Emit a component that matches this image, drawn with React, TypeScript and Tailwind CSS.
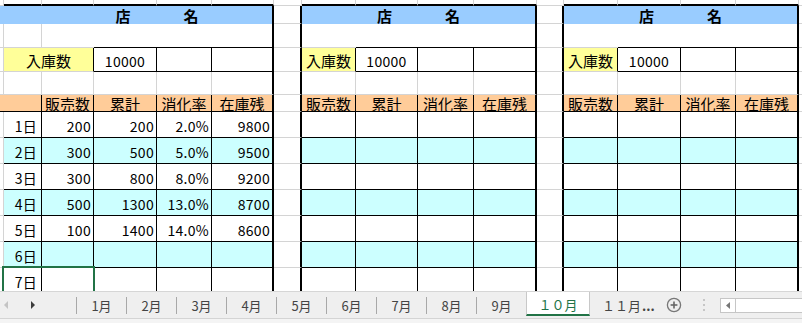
import React from 'react';

const RG = 'border-r border-r-[#d4d4d4]';
const RB = 'border-r border-r-black';
const RT = 'border-r-2 border-r-black';
const RN = '';
const BG = 'border-b border-b-[#d4d4d4]';
const BB = 'border-b border-b-black';
const BT = 'border-b-2 border-b-black';
const BN = '';

const BLUE = 'bg-[#99ccff]';
const YEL = 'bg-[#ffff99]';
const ORG = 'bg-[#ffcc99]';
const CYAN = 'bg-[#ccffff]';
const WH = 'bg-white';

type CellProps = {
  w: string;
  r?: string;
  b?: string;
  bg?: string;
  className?: string;
  children?: React.ReactNode;
};

function Cell({ w, r = RN, b = BN, bg = WH, className = '', children }: CellProps) {
  return (
    <div className={`${w} ${r} ${b} ${bg} shrink-0 h-full flex whitespace-nowrap ${className}`}>
      {children}
    </div>
  );
}

const T1 = ['w-[4px]', 'w-[38px]', 'w-[52px]', 'w-[63px]', 'w-[55px]', 'w-[62px]'];
const G1 = 'w-[28px]';
const T2 = ['w-[54px]', 'w-[62px]', 'w-[56px]', 'w-[63px]'];
const G2 = 'w-[27px]';
const T3 = ['w-[54px]', 'w-[63px]', 'w-[55px]', 'w-[63px]'];
const TAIL = 'flex-1 min-w-0';

const Gap1 = ({ r = RT, b = BG }: { r?: string; b?: string }) => <Cell w={G1} r={r} b={b} />;
const Gap2 = ({ r = RT, b = BG }: { r?: string; b?: string }) => <Cell w={G2} r={r} b={b} />;
const Tail = ({ b = BG }: { b?: string }) => <div className={`${TAIL} ${b} h-full bg-white`} />;

const jp = 'text-[15px] leading-none';
const num = 'text-[14px] leading-none tracking-[0.3px]';

function ShopName() {
  return (
    <div className="flex-1 flex items-center justify-center gap-[53px] font-bold text-[15px] leading-none pt-[1px]">
      <span>店</span>
      <span>名</span>
    </div>
  );
}

function Label({ t }: { t: string }) {
  return <div className={`flex-1 flex items-center justify-center ${jp} pt-[1px]`}>{t}</div>;
}

function Num({ t, center }: { t: string; center?: boolean }) {
  return (
    <div
      className={`flex-1 flex items-center ${center ? 'justify-center' : 'justify-end pr-[2px]'} ${num} pt-[2px]`}
    >
      {t}
    </div>
  );
}

const days: string[][] = [
  ['1日', '200', '200', '2.0%', '9800'],
  ['2日', '300', '500', '5.0%', '9500'],
  ['3日', '300', '800', '8.0%', '9200'],
  ['4日', '500', '1300', '13.0%', '8700'],
  ['5日', '100', '1400', '14.0%', '8600'],
  ['6日', '', '', '', ''],
  ['7日', '', '', '', ''],
];

const heads = ['販売数', '累計', '消化率', '在庫残'];

function SmallTable({ cols, kind, bg }: { cols: string[]; kind: string; bg?: string }) {
  if (kind === 'top') {
    return (
      <>
        {cols.map((w, i) => (
          <Cell key={i} w={w} r={RG} b={BT} />
        ))}
      </>
    );
  }
  if (kind === 'blue') {
    return (
      <Cell w="w-[235px]" r={RT} bg={BLUE}>
        <ShopName />
      </Cell>
    );
  }
  if (kind === 'row2') {
    return (
      <>
        <Cell w={cols[0]} b={BG} />
        <Cell w={cols[1]} b={BB} />
        <Cell w={cols[2]} b={BB} />
        <Cell w={cols[3]} r={RT} b={BB} />
      </>
    );
  }
  if (kind === 'stock') {
    return (
      <>
        <Cell w={cols[0]} r={RB} b={BG} bg={YEL}>
          <Label t="入庫数" />
        </Cell>
        <Cell w={cols[1]} r={RB} b={BB}>
          <Num t="10000" center />
        </Cell>
        <Cell w={cols[2]} r={RB} b={BB} />
        <Cell w={cols[3]} r={RT} b={BB} />
      </>
    );
  }
  if (kind === 'row4') {
    return (
      <>
        <Cell w={cols[0]} r={RG} b={BG} />
        <Cell w={cols[1]} r={RG} b={BG} />
        <Cell w={cols[2]} r={RG} b={BG} />
        <Cell w={cols[3]} r={RT} b={BG} />
      </>
    );
  }
  if (kind === 'head') {
    return (
      <>
        {cols.map((w, i) => (
          <Cell key={i} w={w} r={i === 3 ? RT : RB} b={BB} bg={ORG}>
            <Label t={heads[i]} />
          </Cell>
        ))}
      </>
    );
  }
  return (
    <>
      {cols.map((w, i) => (
        <Cell key={i} w={w} r={i === 3 ? RT : RB} b={BB} bg={bg} />
      ))}
    </>
  );
}

function Sheet() {
  return (
    <div className="relative h-[291px] overflow-hidden bg-white">
      <div className="flex h-[6px]">
        {T1.map((w, i) => (
          <Cell key={i} w={w} r={RG} b={i === 0 ? BG : BT} />
        ))}
        <Gap1 r={RG} />
        <SmallTable cols={T2} kind="top" />
        <Gap2 r={RG} />
        <SmallTable cols={T3} kind="top" />
        <Tail />
      </div>
      <div className="flex h-[18px]">
        <Cell w="w-[42px]" bg={BLUE} />
        <Cell w="w-[232px]" r={RT} bg={BLUE}>
          <ShopName />
        </Cell>
        <Gap1 />
        <SmallTable cols={T2} kind="blue" />
        <Gap2 />
        <SmallTable cols={T3} kind="blue" />
        <Tail />
      </div>
      <div className="flex h-[24px]">
        <Cell w={T1[0]} r={RG} b={BG} />
        <Cell w={T1[1]} r={RG} b={BG} />
        <Cell w={T1[2]} b={BG} />
        <Cell w={T1[3]} b={BB} />
        <Cell w={T1[4]} b={BB} />
        <Cell w={T1[5]} r={RT} b={BB} />
        <Gap1 />
        <SmallTable cols={T2} kind="row2" />
        <Gap2 />
        <SmallTable cols={T3} kind="row2" />
        <Tail />
      </div>
      <div className="flex h-[24px]">
        <Cell w={T1[0]} r={RG} b={BG} />
        <Cell w="w-[90px]" r={RB} b={BG} bg={YEL}>
          <Label t="入庫数" />
        </Cell>
        <Cell w={T1[3]} r={RB} b={BB}>
          <Num t="10000" center />
        </Cell>
        <Cell w={T1[4]} r={RB} b={BB} />
        <Cell w={T1[5]} r={RT} b={BB} />
        <Gap1 />
        <SmallTable cols={T2} kind="stock" />
        <Gap2 />
        <SmallTable cols={T3} kind="stock" />
        <Tail />
      </div>
      <div className="flex h-[23px]">
        <Cell w={T1[0]} r={RG} b={BG} />
        <Cell w={T1[1]} r={RG} b={BG} />
        <Cell w={T1[2]} r={RG} b={BG} />
        <Cell w={T1[3]} r={RG} b={BG} />
        <Cell w={T1[4]} r={RG} b={BG} />
        <Cell w={T1[5]} r={RT} b={BG} />
        <Gap1 />
        <SmallTable cols={T2} kind="row4" />
        <Gap2 />
        <SmallTable cols={T3} kind="row4" />
        <Tail />
      </div>
      <div className="flex h-[17px]">
        <Cell w="w-[42px]" r={RB} b={BB} bg={ORG} />
        {heads.map((h, i) => (
          <Cell key={i} w={T1[i + 2]} r={i === 3 ? RT : RB} b={BB} bg={ORG}>
            <Label t={h} />
          </Cell>
        ))}
        <Gap1 />
        <SmallTable cols={T2} kind="head" />
        <Gap2 />
        <SmallTable cols={T3} kind="head" />
        <Tail />
      </div>
      {days.map((d, ri) => {
        const bg = ri % 2 === 1 ? CYAN : WH;
        return (
          <div key={ri} className="flex h-[26px]">
            <Cell w={T1[0]} r={RG} b={BG} />
            <Cell w={T1[1]} r={RB} b={BB} bg={bg}>
              <div className={`flex-1 flex items-center justify-end pr-[4px] ${num} pt-[2px]`}>{d[0]}</div>
            </Cell>
            {[1, 2, 3, 4].map((ci) => (
              <Cell key={ci} w={T1[ci + 1]} r={ci === 4 ? RT : RB} b={BB} bg={bg}>
                <Num t={d[ci]} />
              </Cell>
            ))}
            <Gap1 />
            <SmallTable cols={T2} kind="data" bg={bg} />
            <Gap2 />
            <SmallTable cols={T3} kind="data" bg={bg} />
            <Tail />
          </div>
        );
      })}
      <div className="absolute left-[2px] top-[266px] w-[93px] h-[30px] border-2 border-[#217346]" />
    </div>
  );
}

function Sep() {
  return <div className="w-px h-[17px] bg-[#a8a8a8] self-center shrink-0" />;
}

function Tab({ t }: { t: string }) {
  return <div className="w-[49px] shrink-0 flex items-center justify-center">{t}</div>;
}

function TabBar() {
  const tabs = ['1月', '2月', '3月', '4月', '5月', '6月', '7月', '8月', '9月'];
  return (
    <>
      <div className="flex h-[27px] bg-[#efefef] border-t border-t-[#d6d6d6] text-[13px] leading-none text-[#444]">
        <div className="w-[76px] shrink-0 flex items-center">
          <svg width="5" height="8" viewBox="0 0 5 8" className="ml-[3px]">
            <polygon points="5,0 5,8 1,4" fill="#c4c4c4" />
          </svg>
          <svg width="5" height="8" viewBox="0 0 5 8" className="ml-[23px]">
            <polygon points="0,0 0,8 4,4" fill="#3c3c3c" />
          </svg>
        </div>
        {tabs.map((t) => (
          <React.Fragment key={t}>
            <Sep />
            <Tab t={t} />
          </React.Fragment>
        ))}
        <div className="w-[64px] h-[24px] shrink-0 bg-white border-x border-x-[#c8c8c8] border-b-2 border-b-[#217346] flex items-center justify-center text-[#217346] pt-[2px]">
          １０月
        </div>
        <div className="w-[76px] shrink-0 flex items-center pl-[12px] whitespace-nowrap">
          <span>１１月</span>
          <span className="ml-[1px] font-bold">...</span>
        </div>
        <div className="w-[16px] shrink-0 flex items-center justify-center">
          <svg width="16" height="16" viewBox="0 0 16 16">
            <circle cx="8" cy="8" r="6.6" fill="none" stroke="#777" strokeWidth="1.3" />
            <line x1="4.6" y1="8" x2="11.4" y2="8" stroke="#666" strokeWidth="1.6" />
            <line x1="8" y1="4.6" x2="8" y2="11.4" stroke="#666" strokeWidth="1.6" />
          </svg>
        </div>
        <div className="w-[19px] shrink-0" />
        <div className="w-[6px] shrink-0 flex items-center justify-center">
          <svg width="4" height="14" viewBox="0 0 4 14">
            <rect x="1" y="1" width="2" height="2" fill="#c6c6c6" />
            <rect x="1" y="6" width="2" height="2" fill="#c6c6c6" />
            <rect x="1" y="11" width="2" height="2" fill="#c6c6c6" />
          </svg>
        </div>
        <div className="w-[13px] shrink-0" />
        <div className="flex-1 min-w-0 h-[15px] self-center flex bg-white border border-[#c6c6c6] border-r-0">
          <div className="w-[15px] h-full border-r border-r-[#c6c6c6] flex items-center justify-center">
            <svg width="4" height="7" viewBox="0 0 4 7">
              <polygon points="4,0 4,7 0,3.5" fill="#777" />
            </svg>
          </div>
        </div>
      </div>
      <div className="h-[5px] bg-[#f4f4f4] border-t border-t-[#d4d4d4]" />
    </>
  );
}

export default function App() {
  return (
    <div className="w-[802px] h-[323px] overflow-hidden bg-white text-black font-['Noto_Sans_CJK_JP','Noto_Sans',sans-serif]">
      <Sheet />
      <TabBar />
    </div>
  );
}
